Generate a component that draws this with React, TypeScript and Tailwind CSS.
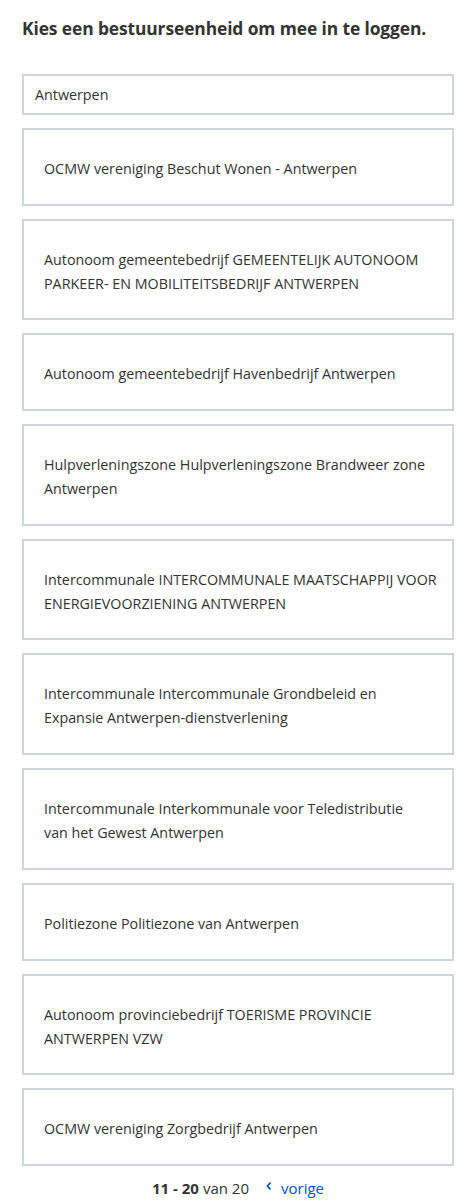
import React from "react";

const items: string[][] = [
  ["OCMW vereniging Beschut Wonen - Antwerpen"],
  ["Autonoom gemeentebedrijf GEMEENTELIJK AUTONOOM", "PARKEER- EN MOBILITEITSBEDRIJF ANTWERPEN"],
  ["Autonoom gemeentebedrijf Havenbedrijf Antwerpen"],
  ["Hulpverleningszone Hulpverleningszone Brandweer zone", "Antwerpen"],
  ["Intercommunale INTERCOMMUNALE MAATSCHAPPIJ VOOR", "ENERGIEVOORZIENING ANTWERPEN"],
  ["Intercommunale Intercommunale Grondbeleid en", "Expansie Antwerpen-dienstverlening"],
  ["Intercommunale Interkommunale voor Teledistributie", "van het Gewest Antwerpen"],
  ["Politiezone Politiezone van Antwerpen"],
  ["Autonoom provinciebedrijf TOERISME PROVINCIE", "ANTWERPEN VZW"],
  ["OCMW vereniging Zorgbedrijf Antwerpen"],
];

export default function App() {
  return (
    <div
      className="w-[476px] min-h-[1202px] bg-white px-[22px] pt-[14px] text-[#333332]"
      style={{ fontFamily: '"Open Sans", "Noto Sans", sans-serif' }}
    >
      <h1 className="text-[17.4px] font-bold leading-[28px] tracking-[-0.1px] whitespace-nowrap">
        Kies een bestuurseenheid om mee in te loggen.
      </h1>
      <div className="mt-[32px] h-[41px] border-2 border-[#cfd5dd] px-[11px] flex items-center text-[14.3px]">
        Antwerpen
      </div>
      <div className="mt-[13px] flex flex-col gap-[13px]">
        {items.map((lines, i) => (
          <div
            key={i}
            className="border-2 border-[#cfd5dd] px-[20px] pt-[27px] pb-[22.7px] text-[14.3px] leading-[24px]"
          >
            {lines.map((l, j) => (
              <div key={j} className="whitespace-nowrap">{l}</div>
            ))}
          </div>
        ))}
      </div>
      <div className="mt-[10px] flex items-center justify-center text-[15px] leading-[24px]">
        <span className="font-bold">11 - 20</span>
        <span className="ml-[4px]">van 20</span>
        <span className="ml-[16px] flex items-center text-[#0055cc]">
          <svg width="8" height="10" viewBox="0 0 8 10" className="mr-[8px] mb-[3px]">
            <path d="M5.5 1.5 L2.5 5 L5.5 8.5" fill="none" stroke="#0055cc" strokeWidth="1.8" />
          </svg>
          vorige
        </span>
      </div>
    </div>
  );
}
